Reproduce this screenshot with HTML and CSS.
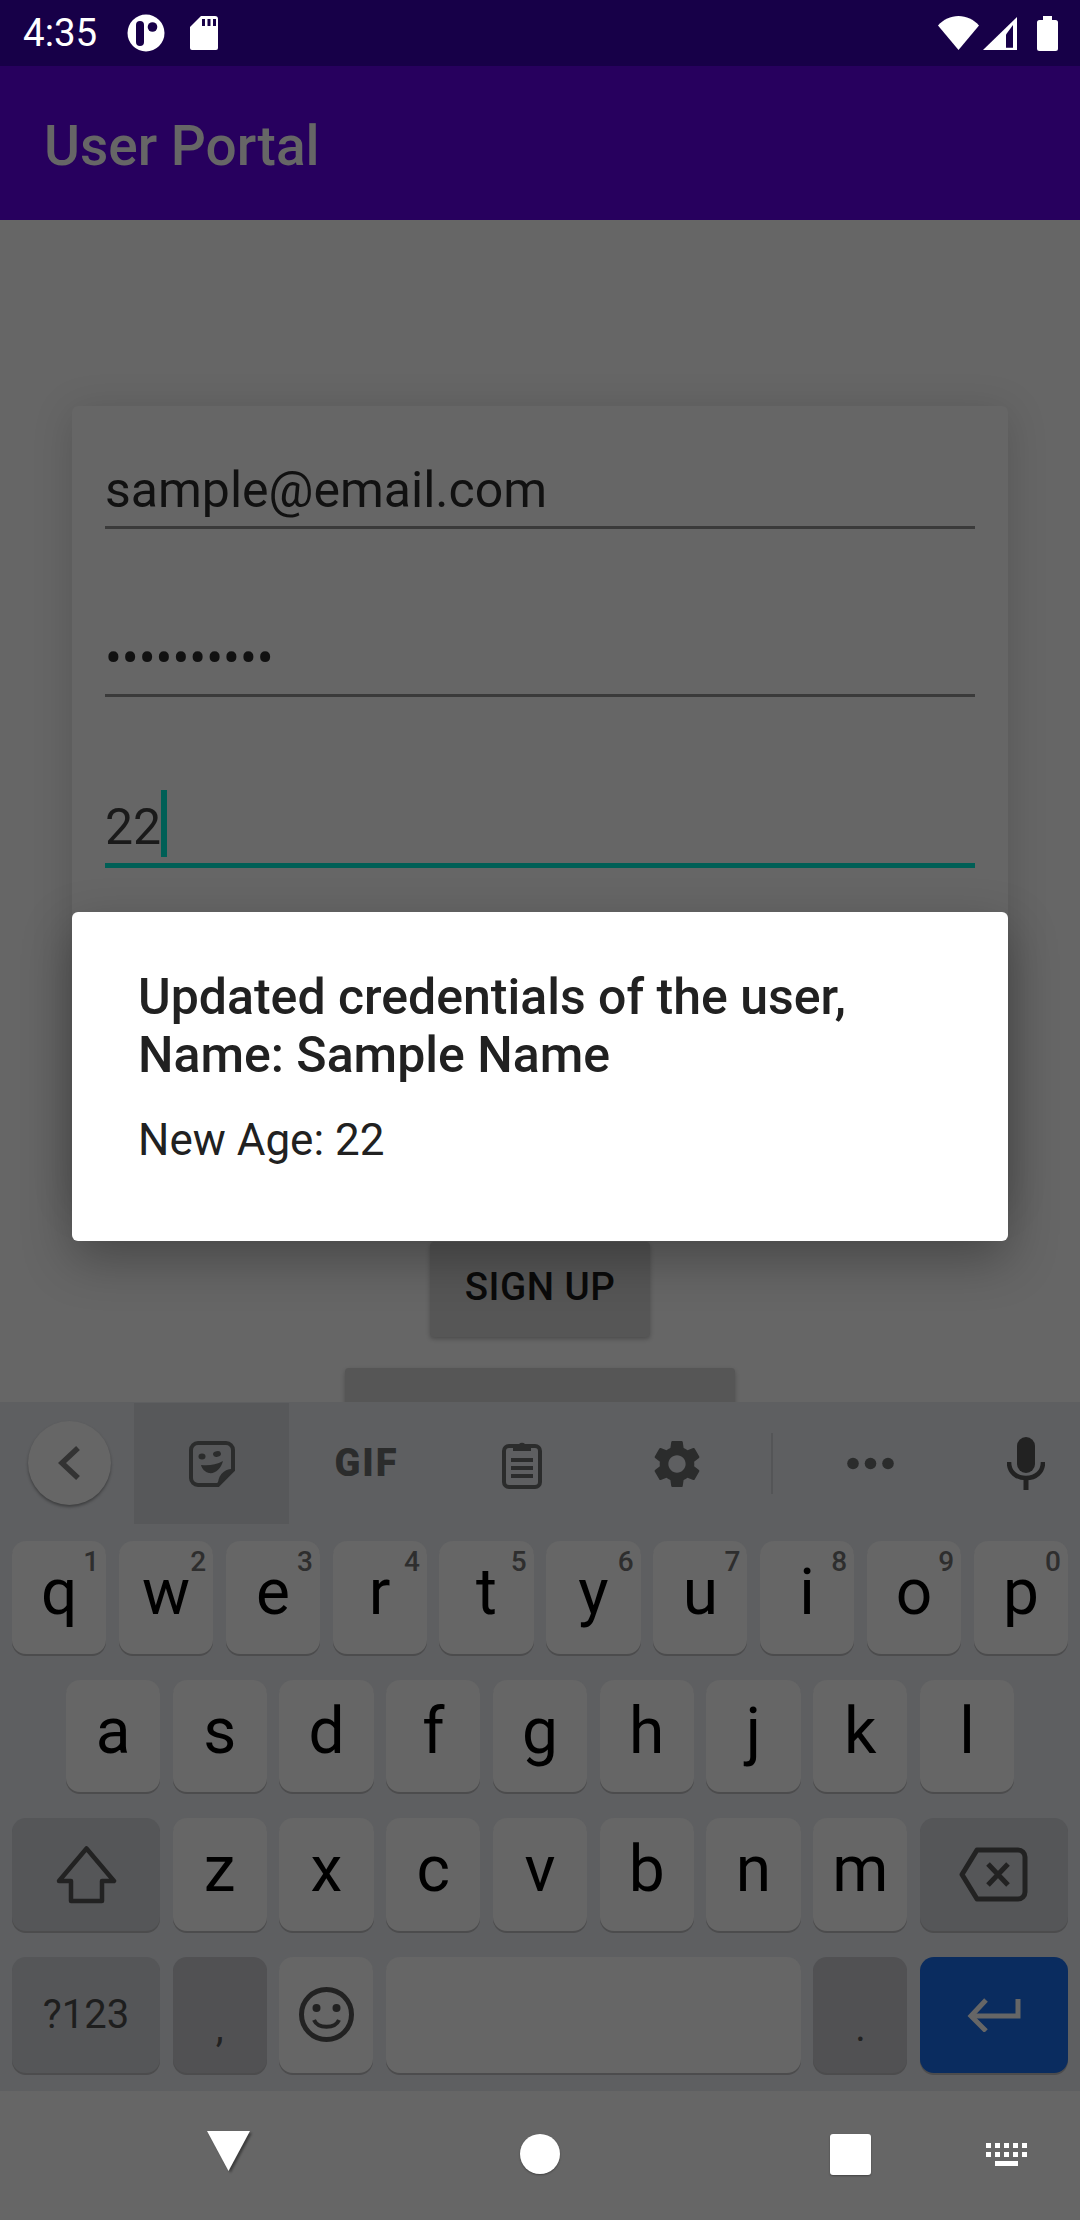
FILE: index.html
```html
<!DOCTYPE html>
<html lang="en">

<head>
  <meta charset="UTF-8">
  <meta name="viewport" content="width=device-width, initial-scale=1.0">
  <title>User Portal</title>
  <link rel="stylesheet" href="styles.css">
</head>

<body>
  <!-- status bar -->
  <div class="status-bar">
    <span class="clock">4:35</span>
    <svg class="status-left-icon" width="38" height="38" viewBox="0 0 38 38">
      <circle cx="19" cy="19" r="18.5" fill="#fff" />
      <rect x="9" y="7" width="8" height="25" rx="4" fill="#170048" />
      <circle cx="25.5" cy="13" r="4.8" fill="#170048" />
    </svg>
    <svg class="status-left-icon sd" width="28" height="34" viewBox="0 0 28 34">
      <path d="M11 0H25a3 3 0 0 1 3 3V32a2 2 0 0 1-2 2H2a2 2 0 0 1-2-2V11z" fill="#fff" />
      <path d="M12 3h3v7h-3zM17.5 3h3v7h-3zM23 3h3v7h-3z" fill="#170048" />
    </svg>
    <span class="status-spacer"></span>
    <svg width="41" height="34" viewBox="0 0 41 34">
      <path d="M0 9.500C5.500 3.500 12.500 0 20.500 0S35.500 3.500 41 9.500L20.500 34z" fill="#fff" />
    </svg>
    <svg class="signal" width="34" height="33" viewBox="0 0 34 33">
      <path d="M34 0V33H0z" fill="#fff" />
      <path d="M23 30.700V17.500L30 8V30.700z" fill="#170048" />
    </svg>
    <svg class="battery" width="21" height="35" viewBox="0 0 21 35">
      <path d="M6 0h9v4h3.500a2.500 2.500 0 0 1 2.500 2.500V32.500a2.500 2.500 0 0 1-2.500 2.500H2.500A2.500 2.500 0 0 1 0 32.500V6.500A2.500 2.500 0 0 1 2.500 4H6z" fill="#fff" />
    </svg>
  </div>

  <div class="app-bar">User Portal</div>

  <!-- form behind the dialog -->
  <div class="content">
    <div class="card">
      <div class="field">sample@email.com</div>
      <div class="field">••••••••••</div>
      <div class="field focused">22<span class="caret"></span></div>
    </div>
    <div class="btn sign-up">SIGN UP</div>
    <div class="btn second"></div>

    <div class="dialog">
      <div class="dialog-title">Updated credentials of the user, Name: Sample Name</div>
      <div class="dialog-text">New Age: 22</div>
    </div>
  </div>

  <!-- keyboard -->
  <div class="keyboard">
    <div class="strip">
      <div class="strip-back">
        <svg width="24" height="36" viewBox="0 0 24 36">
          <path d="M20 3L4 18l16 15" fill="none" stroke="#333" stroke-width="5.500" />
        </svg>
      </div>
      <div class="strip-item active">
        <svg width="46" height="46" viewBox="0 0 46 46">
          <path d="M9 2H37a7 7 0 0 1 7 7V29L29 44H9a7 7 0 0 1-7-7V9a7 7 0 0 1 7-7z" fill="none" stroke="#2b2c2c" stroke-width="4" />
          <path d="M45 28L29 45C28 35 35 27 45 28z" fill="#2b2c2c" />
          <ellipse cx="13" cy="15.500" rx="3.500" ry="3" fill="#2b2c2c" />
          <ellipse cx="28" cy="13" rx="4" ry="2.800" transform="rotate(-12 28 13)" fill="#2b2c2c" />
          <path d="M12 24C19 25 27 24 34 20C32 28 26 33 20 32C16 31 13 28 12 24z" fill="#2b2c2c" />
        </svg>
      </div>
      <div class="strip-item gif">GIF</div>
      <div class="strip-item">
        <svg width="42" height="50" viewBox="0 0 42 50">
          <path d="M8 7H34a5 5 0 0 1 5 5V43a5 5 0 0 1-5 5H8a5 5 0 0 1-5-5V12a5 5 0 0 1 5-5z" fill="none" stroke="#2b2c2c" stroke-width="4" />
          <path d="M12 5h6a4 4 0 0 1 6 0h6v7H12z" fill="#2b2c2c" />
          <path d="M10 19h22v4H10zM10 27h22v4H10zM10 35h22v4H10z" fill="#2b2c2c" />
        </svg>
      </div>
      <div class="strip-item">
        <svg width="48" height="48" viewBox="2 2 20 20">
          <path d="M19.14 12.940c.04-.3.06-.61.06-.94 0-.32-.02-.64-.07-.94l2.030-1.580c.18-.14.23-.41.12-.61l-1.920-3.320c-.12-.22-.37-.29-.59-.22l-2.390.96c-.5-.38-1.030-.7-1.620-.94l-.36-2.540c-.04-.24-.24-.41-.48-.41h-3.840c-.24 0-.43.17-.47.41l-.36 2.540c-.59.24-1.130.57-1.620.94l-2.390-.96c-.22-.08-.47 0-.59.22L2.740 8.870c-.12.21-.08.47.12.61l2.030 1.580c-.05.3-.09.63-.09.94s.02.64.07.94l-2.030 1.580c-.18.14-.23.41-.12.61l1.920 3.320c.12.22.37.29.59.22l2.390-.96c.5.38 1.030.7 1.620.94l.36 2.540c.05.24.24.41.48.41h3.840c.24 0 .44-.17.47-.41l.36-2.540c.59-.24 1.130-.56 1.620-.94l2.390.96c.22.08.47 0 .59-.22l1.920-3.320c.12-.22.07-.47-.12-.61l-2.010-1.580zM12 15.600c-1.980 0-3.600-1.620-3.600-3.600s1.620-3.600 3.600-3.600 3.600 1.620 3.600 3.600-1.620 3.600-3.600 3.600z" fill="#2b2c2c" />
        </svg>
      </div>
      <div class="strip-sep"></div>
      <div class="strip-item more">
        <svg width="47" height="13" viewBox="0 0 47 13">
          <circle cx="6" cy="6.500" r="5.800" fill="#2b2c2c" />
          <circle cx="23.500" cy="6.500" r="5.800" fill="#2b2c2c" />
          <circle cx="41" cy="6.500" r="5.800" fill="#2b2c2c" />
        </svg>
      </div>
      <div class="strip-item">
        <svg width="38" height="53" viewBox="0 0 38 53">
          <rect x="10" y="0" width="18" height="36" rx="9" fill="#222" />
          <path d="M2 25C2 35 9 41 19 41S36 35 36 25" fill="none" stroke="#222" stroke-width="4.500" />
          <path d="M16.500 41h5v12h-5z" fill="#222" />
        </svg>
      </div>
    </div>

    <div class="rows">
      <div class="row row-top">
        <div class="key">q<span class="hint">1</span></div>
        <div class="key">w<span class="hint">2</span></div>
        <div class="key">e<span class="hint">3</span></div>
        <div class="key">r<span class="hint">4</span></div>
        <div class="key">t<span class="hint">5</span></div>
        <div class="key">y<span class="hint">6</span></div>
        <div class="key">u<span class="hint">7</span></div>
        <div class="key">i<span class="hint">8</span></div>
        <div class="key">o<span class="hint">9</span></div>
        <div class="key">p<span class="hint">0</span></div>
      </div>
      <div class="row row-mid">
        <div class="key">a</div>
        <div class="key">s</div>
        <div class="key">d</div>
        <div class="key">f</div>
        <div class="key">g</div>
        <div class="key">h</div>
        <div class="key">j</div>
        <div class="key">k</div>
        <div class="key">l</div>
      </div>
      <div class="row">
        <div class="key wide dark">
          <svg width="61" height="59" viewBox="0 0 61 59">
            <path d="M30.500 3.500L58 36H46V56H15V36H3z" fill="none" stroke="#222" stroke-width="4.500" stroke-linejoin="round" />
          </svg>
        </div>
        <div class="key">z</div>
        <div class="key">x</div>
        <div class="key">c</div>
        <div class="key">v</div>
        <div class="key">b</div>
        <div class="key">n</div>
        <div class="key">m</div>
        <div class="key wide dark">
          <svg width="69" height="55" viewBox="0 0 69 55">
            <path d="M18 3H59a7 7 0 0 1 7 7V45a7 7 0 0 1-7 7H18L3 27.500z" fill="none" stroke="#222" stroke-width="5" stroke-linejoin="round" />
            <path d="M29 17L49 38M49 17L29 38" fill="none" stroke="#222" stroke-width="5" />
          </svg>
        </div>
      </div>
      <div class="row row-bottom">
        <div class="key wide dark symbols">?123</div>
        <div class="key narrow darker punct">,</div>
        <div class="key narrow">
          <svg width="55" height="55" viewBox="0 0 55 55">
            <circle cx="27.500" cy="27.500" r="25" fill="none" stroke="#222" stroke-width="5" />
            <circle cx="17.500" cy="21" r="4" fill="#222" />
            <circle cx="37.500" cy="21" r="4" fill="#222" />
            <path d="M15 33C19 42 36 42 40 33" fill="none" stroke="#222" stroke-width="4" />
          </svg>
        </div>
        <div class="key space"></div>
        <div class="key narrow darker punct">.</div>
        <div class="key wide enter">
          <svg width="54" height="34" viewBox="0 0 54 34">
            <path d="M51 1V18H6" fill="none" stroke="#666" stroke-width="5" />
            <path d="M19 2L4 18l15 15" fill="none" stroke="#666" stroke-width="5" />
          </svg>
        </div>
      </div>
    </div>
  </div>

  <!-- navigation bar -->
  <div class="nav-bar">
    <svg class="nav-icon" width="43" height="40" viewBox="0 0 43 40">
      <path d="M0 0H43L21.500 40z" fill="#fff" />
    </svg>
    <span class="nav-home"></span>
    <span class="nav-recent"></span>
    <svg class="nav-keyboard" width="46" height="24" viewBox="0 0 46 24">
      <path d="M0 0h5v5H0zM9 0h5v5H9zM18 0h5v5h-5zM27 0h5v5h-5zM36 0h5v5h-5zM0 9h5v5H0zM9 9h5v5H9zM18 9h5v5h-5zM27 9h5v5h-5zM36 9h5v5h-5zM9 18h23v5H9z" fill="#fff" />
    </svg>
  </div>
</body>

</html>
```

FILE: styles.css
```css
* {
  box-sizing: border-box;
  margin: 0;
  padding: 0;
}

body {
  display: flex;
  flex-direction: column;
  width: 1080px;
  height: 2220px;
  overflow: hidden;
  background-color: #666;
  font-family: Roboto, "Liberation Sans", sans-serif;
}

.status-bar {
  display: flex;
  align-items: center;
  flex: 0 0 66px;
  padding: 0 22px 0 23px;
  background-color: #170048;
  color: #fff;
}

.clock {
  font-size: 38.5px;
  line-height: 66px;
  width: 104px;
}

.status-left-icon {
  margin-right: 25px;
}

.status-spacer {
  flex: 1;
}

.signal {
  margin-left: 4px;
}

.battery {
  margin-left: 20px;
}

.app-bar {
  display: flex;
  align-items: center;
  flex: 0 0 154px;
  padding: 6px 0 0 44px;
  background-color: #27005e;
  color: #666;
  font-size: 55px;
  font-weight: 500;
}

.content {
  position: relative;
  flex: 1;
  overflow: hidden;
  display: flex;
  flex-direction: column;
  align-items: center;
  padding-top: 186px;
}

.card {
  width: 936px;
  height: 794px;
  flex: none;
  padding: 23px 33px 0;
  border-radius: 6px;
  background-color: #666;
  box-shadow: 0 6px 40px rgba(0, 0, 0, 0.16);
}

.field {
  display: flex;
  align-items: flex-end;
  height: 100px;
  margin-bottom: 68px;
  padding-bottom: 8px;
  border-bottom: 3px solid #3a3a3a;
  color: #111;
  font-size: 50px;
  line-height: 56px;
}

.field.focused {
  height: 103px;
  border-bottom: 5px solid #005f56;
  padding-bottom: 8px;
  color: #1a1a1a;
}

.caret {
  width: 6px;
  height: 67px;
  margin-bottom: -2px;
  background-color: #005f56;
}

.btn {
  flex: none;
  border-radius: 4px;
  background-color: #565656;
  box-shadow: 0 2px 4px rgba(0, 0, 0, 0.25);
}

.sign-up {
  width: 220px;
  height: 95px;
  margin-top: 42px;
  color: #0a0a0a;
  font-size: 38.5px;
  font-weight: 500;
  line-height: 90px;
  letter-spacing: 0.5px;
  text-align: center;
}

.second {
  width: 390px;
  height: 94px;
  margin-top: 31px;
}

.dialog {
  position: absolute;
  left: 72px;
  top: 692px;
  width: 936px;
  height: 329px;
  padding: 56px 66px 0;
  border-radius: 6px;
  background-color: #fff;
  box-shadow: 0 18px 50px rgba(0, 0, 0, 0.3);
}

.dialog-title {
  color: #212121;
  font-size: 50px;
  font-weight: 500;
  line-height: 58px;
}

.dialog-text {
  margin-top: 28px;
  color: #212121;
  font-size: 44px;
  line-height: 56px;
}

.keyboard {
  flex: 0 0 689px;
  padding-top: 1px;
  background-color: #5e5f61;
}

.strip {
  display: flex;
  align-items: stretch;
  height: 121px;
  overflow: hidden;
}

.strip-back {
  display: flex;
  align-items: center;
  justify-content: center;
  flex: none;
  width: 83px;
  height: 84px;
  margin: 18px 23px 0 28px;
  border-radius: 50%;
  background-color: #666;
  box-shadow: 0 2px 3px rgba(0, 0, 0, 0.35);
}

.strip-item {
  display: flex;
  align-items: center;
  justify-content: center;
  flex: 0 0 155px;
}

.strip-item.active {
  background-color: #57585a;
}

.gif {
  padding-bottom: 2px;
  color: #2b2c2c;
  font-size: 38px;
  font-weight: 900;
  letter-spacing: 2px;
}

.strip-sep {
  flex: none;
  width: 2px;
  height: 61px;
  margin: 30px 20px 0 17px;
  background-color: #545557;
}

.rows {
  display: flex;
  flex-direction: column;
  gap: 26px;
  padding: 17px 12px 0;
}

.row {
  display: flex;
  gap: 12.6px;
  height: 112.5px;
}

.row-mid {
  padding: 0 54px;
}

.row-bottom {
  height: 116px;
}

.key {
  position: relative;
  display: flex;
  align-items: center;
  justify-content: center;
  flex: 1;
  padding-bottom: 8px;
  border-radius: 14px;
  background-color: #666;
  box-shadow: 0 2px 0 #4c4c4d;
  color: #000;
  font-size: 64px;
  line-height: 1;
}

.key svg {
  margin-top: 8px;
}

.key.wide {
  flex: 0 0 148px;
}

.key.narrow {
  flex: 0 0 94px;
}

.key.space {
  flex: 1;
}

.key.dark {
  background-color: #555658;
}

.key.darker {
  background-color: #515153;
}

.key.symbols {
  padding-bottom: 0;
  color: #1e1e1e;
  font-size: 40px;
}

.key.punct {
  padding: 26px 0 0;
  color: #222;
  font-size: 40px;
}

.key.enter {
  background-color: #0a2c5f;
}

.hint {
  position: absolute;
  top: 5px;
  right: 7px;
  color: #2e2e2e;
  font-size: 28px;
  font-weight: 500;
  line-height: 32px;
}

.nav-bar {
  display: flex;
  align-items: flex-start;
  gap: 270px;
  flex: 0 0 129px;
  padding: 40px 0 0 207px;
  background-color: #666;
}

.nav-icon {
  filter: drop-shadow(2px 2px 1px rgba(0, 0, 0, 0.4));
}

.nav-home {
  flex: none;
  width: 40px;
  height: 40px;
  margin-top: 3px;
  border-radius: 50%;
  background-color: #fff;
  box-shadow: 0 1px 2px rgba(0, 0, 0, 0.35);
}

.nav-recent {
  flex: none;
  width: 41px;
  height: 41px;
  margin-top: 3px;
  border-radius: 3px;
  background-color: #fff;
  box-shadow: 0 1px 2px rgba(0, 0, 0, 0.35);
}

.nav-keyboard {
  margin: 12px 0 0 -155px;
}
```
